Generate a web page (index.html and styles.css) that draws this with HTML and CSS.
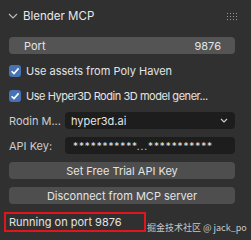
FILE: index.html
```html
<!DOCTYPE html>
<html>
<head>
<meta charset="utf-8">
<link rel="stylesheet" href="styles.css">
</head>
<body>
<div class="panel">
  <div class="header">
    <svg class="chev" width="10" height="6" viewBox="0 0 10 6"><path d="M1 1 L5 5 L9 1" fill="none" stroke="#bdbdbd" stroke-width="1.1"/></svg>
    <span class="title">Blender MCP</span>
    <svg class="grip" width="10" height="7" viewBox="0 0 10 7">
      <g fill="#9a9a9a">
        <rect x="0" y="0" width="1" height="1"/><rect x="3" y="0" width="1" height="1"/><rect x="6" y="0" width="1" height="1"/><rect x="9" y="0" width="1" height="1"/>
        <rect x="0" y="3" width="1" height="1"/><rect x="3" y="3" width="1" height="1"/><rect x="6" y="3" width="1" height="1"/><rect x="9" y="3" width="1" height="1"/>
        <rect x="0" y="6" width="1" height="1"/><rect x="3" y="6" width="1" height="1"/><rect x="6" y="6" width="1" height="1"/><rect x="9" y="6" width="1" height="1"/>
      </g>
    </svg>
  </div>
  <div class="body">
    <div class="row numfield"><span>Port</span><span>9876</span></div>
    <div class="row check"><span class="box"><svg width="12" height="12" viewBox="0 0 12 12"><path d="M2.6 6.2 L5 8.6 L9.6 3.4" fill="none" stroke="#fff" stroke-width="1.6"/></svg></span><span>Use assets from Poly Haven</span></div>
    <div class="row check"><span class="box"><svg width="12" height="12" viewBox="0 0 12 12"><path d="M2.6 6.2 L5 8.6 L9.6 3.4" fill="none" stroke="#fff" stroke-width="1.6"/></svg></span><span class="tight">Use Hyper3D Rodin 3D model gener...</span></div>
    <div class="row prop"><span class="label">Rodin M...</span><div class="field dd"><span>hyper3d.ai</span><svg width="8" height="5" viewBox="0 0 8 5"><path d="M1 1 L4 4 L7 1" fill="none" stroke="#cfcfcf" stroke-width="1.1"/></svg></div></div>
    <div class="row prop"><span class="label">API Key:</span><div class="field key"><span>***********...***********</span></div></div>
    <div class="row btn">Set Free Trial API Key</div>
    <div class="row btn">Disconnect from MCP server</div>
    <div class="status">Running on port 9876</div>
  </div>
  <div class="wm">掘金技术社区 @ jack_po</div>
</div>
</body>
</html>
```

FILE: styles.css
```css
html, body {
  margin: 0;
  padding: 0;
  background: #2b2b2b;
  width: 251px;
  height: 240px;
  overflow: hidden;
}
.panel {
  position: relative;
  width: 251px;
  height: 240px;
  background: #303030;
  font-family: Inter, "DejaVu Sans", sans-serif;
  font-size: 11px;
  color: #e4e4e4;
  box-sizing: border-box;
  padding-top: 4px;
  white-space: nowrap;
}
.header {
  height: 23px;
  display: flex;
  align-items: center;
  padding-left: 8px;
  padding-right: 14px;
}
.chev { margin-right: 5px; margin-top: 1px; }
.title { flex: 1; font-size: 11.5px; color: #e8e8e8; }
.grip { margin-top: 1px; }
.body {
  display: flex;
  flex-direction: column;
  gap: 8px;
  padding: 10px 16px 0 9px;
}
.row {
  height: 17px;
  display: flex;
  align-items: center;
  box-sizing: border-box;
}
.numfield {
  background: #545454;
  border-radius: 4px;
  justify-content: space-between;
  padding: 0 14px 0 15px;
}
.check .box {
  width: 12px;
  height: 12px;
  background: #4772b3;
  border-radius: 3px;
  margin-right: 5px;
  display: flex;
}
.tight { letter-spacing: -0.45px; }
.prop .label {
  width: 56px;
  color: #cdcdcd;
}
.field {
  flex: 1;
  height: 17px;
  background: #1d1d1d;
  border-radius: 4px;
  display: flex;
  align-items: center;
  box-sizing: border-box;
}
.dd { justify-content: space-between; padding: 0 7px 0 6px; }
.key { padding-left: 8px; letter-spacing: 0.9px; font-size: 10px; }
.btn {
  background: #4e4e4e;
  border-radius: 4px;
  justify-content: center;
}
.status {
  margin-left: -5px;
  width: 142px;
  height: 20px;
  border: 2px solid #e3151c;
  box-sizing: border-box;
  display: flex;
  align-items: center;
  padding-left: 3px;
}
.wm {
  position: absolute;
  left: 147px;
  top: 221px;
  font-family: "Noto Sans CJK SC", sans-serif;
  font-size: 9px;
  color: #c8c8c8;
}
```
